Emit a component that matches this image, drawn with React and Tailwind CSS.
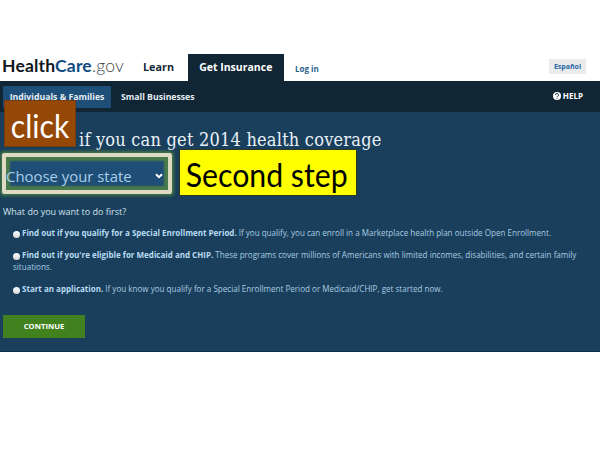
import React from "react";

const options = [
  {
    title: "Find out if you qualify for a Special Enrollment Period.",
    text: "If you qualify, you can enroll in a Marketplace health plan outside Open Enrollment.",
    tracking: "tracking-[0.005px]",
  },
  {
    title: "Find out if you're eligible for Medicaid and CHIP.",
    text: "These programs cover millions of Americans with limited incomes, disabilities, and certain family",
    rest: "situations.",
    tracking: "tracking-[0.005px]",
  },
  {
    title: "Start an application.",
    text: "If you know you qualify for a Special Enrollment Period or Medicaid/CHIP, get started now.",
    tracking: "tracking-[0.01px]",
  },
];

function Header() {
  return (
    <header className="mt-[53px] flex h-[28px] items-stretch whitespace-nowrap bg-white text-[#14293b]">
      <div className="w-[143px] pl-[2px] font-[Lato,sans-serif] text-[17.5px] leading-[25px] tracking-[0.18px]">
        <span className="font-bold text-[#101820]">Health</span>
        <span className="font-bold text-[#0f4c81]">Care</span>
        <span className="font-light text-[#44484d]">.gov</span>
      </div>
      <a className="w-[44.5px] text-[10.8px] font-bold leading-[28px]">Learn</a>
      <a className="mt-px w-[96.5px] bg-[#112634] text-center text-[10.5px] font-bold leading-[27px] text-white">Get Insurance</a>
      <a className="pl-[11px] text-[8px] font-bold leading-[31px] text-[#2a5f8c]">Log in</a>
      <a className="mr-[14px] ml-auto mt-[6px] h-[15px] w-[37px] bg-[#e9ebed] text-center text-[7px] font-bold leading-[16px] text-[#2a66a3]">Español</a>
    </header>
  );
}

function Nav() {
  return (
    <nav className="flex h-[31px] items-start whitespace-nowrap bg-[#112634] pt-[5px] text-[8.7px] font-bold leading-[22px] text-[#e4ecf2]">
      <a className="ml-[3px] h-[22px] w-[108px] rounded-[1px] bg-[#1e4f79] text-center">Individuals &amp; Families</a>
      <a className="ml-[10px]">Small Businesses</a>
      <a className="mr-[17px] ml-auto flex items-center gap-[2px] text-[8px] leading-[20px] text-white">
        <svg width="8" height="8" viewBox="0 0 16 16" className="-mt-px">
          <circle cx="8" cy="8" r="8" fill="#fff" />
          <path d="M5 6a3 3 0 1 1 4.2 2.6Q8 9.2 8 10.5M8 12v1.6" fill="none" stroke="#112634" strokeWidth="2" />
        </svg>
        HELP
      </a>
    </nav>
  );
}

export default function App() {
  return (
    <div className="relative h-[450px] w-[600px] overflow-hidden bg-white font-['Open_Sans',sans-serif]">
      <Header />
      <Nav />
      <main className="flex h-[240px] flex-col items-start whitespace-nowrap border-b border-[#0d2b4c] bg-[#193f5c]">
        <h1 className="mt-[15px] ml-[79px] h-[26px] font-['DejaVu_Serif_Condensed','DejaVu_Serif',serif] text-[18px] leading-[26px] tracking-[0.22px] text-[#e9f1f7] [font-stretch:condensed]">
          if you can get 2014 health coverage
        </h1>
        <div className="ml-[2px] flex h-[41px] w-[170px] items-stretch rounded-[2px] border-4 border-[#dedac3] shadow-[0_0_3px_2px_#447545]">
          <div className="flex flex-1 items-center justify-between bg-[#1e4d76] pr-[5px] text-[14.9px] leading-none text-[#a9cfea] shadow-[inset_0_0_2px_4px_#4a7a4b]">
            <span className="pt-[5px]">Choose your state</span>
            <svg width="8" height="6" viewBox="0 0 8 6" className="mt-[5px]">
              <path d="M1 1.2 4 4.2 7 1.2" fill="none" stroke="#fff" strokeWidth="2" />
            </svg>
          </div>
        </div>
        <p className="mt-[10px] ml-[3px] h-[16px] text-[9px] leading-[16px] text-[#d3e2ed]">What do you want to do first?</p>
        <ul className="mt-[7px] ml-[13px] text-[8.05px] leading-[12px] text-[#a9cbe0]">
          {options.map((o) => (
            <li key={o.title} className="mb-[10px]">
              <label className="flex items-center">
                <span className="mt-[2px] mr-[2px] size-[7px] rounded-full bg-linear-to-b from-white to-[#d8d8d8]" />
                <b className="mr-[2px] text-[8px] text-[#b8dcf2]">{o.title}</b>
                <span className={o.tracking}>{o.text}</span>
              </label>
              {o.rest && <span className="block">{o.rest}</span>}
            </li>
          ))}
        </ul>
        <button className="mt-[10px] ml-[3px] h-[23px] w-[82px] bg-[#41821f] text-center text-[7.7px] font-bold leading-[23px] text-white">CONTINUE</button>
      </main>
      <div className="absolute left-[4px] top-[100px] flex h-[47px] w-[72px] justify-center whitespace-nowrap border border-[#723b12] bg-[#964907] font-[Lato,sans-serif] text-[32px] leading-[49px] text-white">
        <span className="scale-x-[0.94]">click</span>
      </div>
      <div className="absolute left-[179px] top-[149px] flex h-[47px] w-[178px] justify-center whitespace-nowrap border border-[#2b3b20] bg-[#ffff00] font-[Lato,sans-serif] text-[32px] leading-[50px] text-black">
        <span className="-ml-[3px] scale-x-[0.945]">Second step</span>
      </div>
    </div>
  );
}
